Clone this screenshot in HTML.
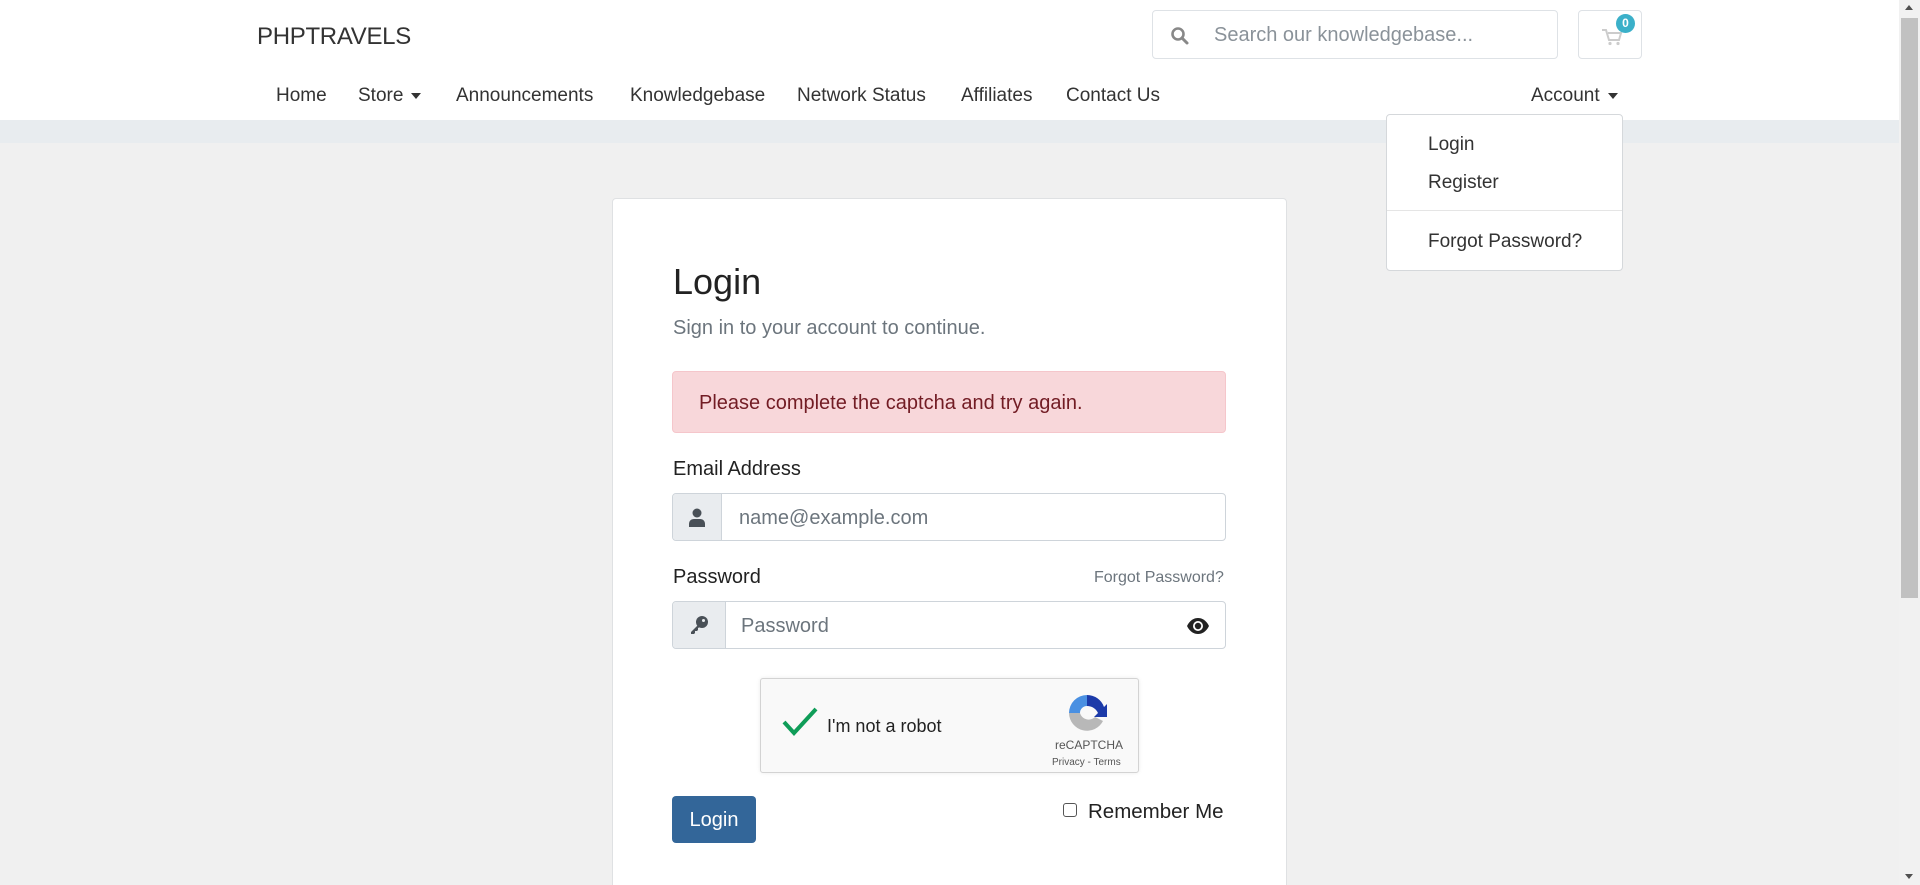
<!DOCTYPE html>
<html style="width:1920px;height:885px;overflow:hidden"><head><meta charset="utf-8"><style>
*{box-sizing:border-box;margin:0;padding:0}
body{width:1920px;height:885px;overflow:hidden;background:#f0f0f0;font-family:"Liberation Sans",sans-serif;position:relative;color:#212529}
.a{position:absolute}
.hdr{left:0;top:0;width:1899px;height:120px;background:#fff}
.band{left:0;top:120px;width:1899px;height:23px;background:#e8ecef}
.nav{top:85px;font-size:19px;color:#333;white-space:nowrap}
.caret{display:inline-block;border-left:5px solid transparent;border-right:5px solid transparent;border-top:6px solid #333;vertical-align:middle;margin-left:8px}
.card{left:612px;top:198px;width:675px;height:700px;background:#fff;border:1px solid #dfe1e3;border-radius:4px}
.inp{border:1px solid #ced4da;border-radius:4px;background:#fff;overflow:hidden}
.addon{position:absolute;left:0;top:0;bottom:0;background:#e9ecef;border-right:1px solid #ced4da}
.ph{position:absolute;top:2px;bottom:0;display:flex;align-items:center;font-size:20px;color:#6c757d}
.sb{left:1899px;top:0;width:21px;height:885px;background:#f1f1f1}
</style></head><body>
<div class="a hdr"></div>
<div class="a band"></div>
<div class="a" style="left:257px;top:23px;font-size:24px;color:#333;letter-spacing:-0.3px">PHPTRAVELS</div>
<div class="a inp" style="left:1152px;top:10px;width:406px;height:49px;border-color:#dee2e6">
 <svg class="a" style="left:17px;top:15px" width="20" height="20" viewBox="0 0 20 20"><circle cx="8" cy="8" r="5.5" fill="none" stroke="#888" stroke-width="2.6"/><path d="M12 12l5 5" stroke="#888" stroke-width="3" stroke-linecap="round"/></svg>
 <div class="ph" style="left:61px;color:#8a9299">Search our knowledgebase...</div>
</div>
<div class="a inp" style="left:1578px;top:10px;width:64px;height:49px;border-color:#dee2e6">
 <svg class="a" style="left:22px;top:17px" width="22" height="18" viewBox="0 0 22 18"><path d="M1 2h4l3 10h10l2-7H7" fill="none" stroke="#ccc" stroke-width="2"/><circle cx="9" cy="15.5" r="1.6" fill="#ccc"/><circle cx="17" cy="15.5" r="1.6" fill="#ccc"/></svg>
</div>
<div class="a" style="left:1616px;top:14px;width:19px;height:19px;border-radius:50%;background:#3bb0c9;color:#fff;font-size:12px;font-weight:bold;text-align:center;line-height:19px">0</div>
<div class="a nav" style="left:276px">Home</div>
<div class="a nav" style="left:358px">Store<span class="caret"></span></div>
<div class="a nav" style="left:456px">Announcements</div>
<div class="a nav" style="left:630px">Knowledgebase</div>
<div class="a nav" style="left:797px">Network Status</div>
<div class="a nav" style="left:961px">Affiliates</div>
<div class="a nav" style="left:1066px">Contact Us</div>
<div class="a nav" style="left:1531px">Account<span class="caret"></span></div>
<div class="a" style="left:1386px;top:114px;width:237px;height:157px;background:#fff;border:1px solid #d5d8db;border-radius:4px;font-size:19px;color:#333">
 <div class="a" style="left:41px;top:19px">Login</div>
 <div class="a" style="left:41px;top:57px">Register</div>
 <div class="a" style="left:0;top:95px;width:235px;height:1px;background:#e5e5e5"></div>
 <div class="a" style="left:41px;top:116px">Forgot Password?</div>
</div>
<div class="a card"></div>
<div class="a" style="left:673px;top:261px;font-size:36px;color:#222">Login</div>
<div class="a" style="left:673px;top:317px;font-size:20px;color:#6c757d">Sign in to your account to continue.</div>
<div class="a" style="left:672px;top:371px;width:554px;height:62px;background:#f8d7da;border:1px solid #f5c6cb;border-radius:4px;color:#721c24;font-size:20px;padding-left:26px;line-height:62px">Please complete the captcha and try again.</div>
<div class="a" style="left:673px;top:458px;font-size:20px;color:#222">Email Address</div>
<div class="a inp" style="left:672px;top:493px;width:554px;height:48px">
 <div class="addon" style="width:49px"><svg class="a" style="left:16px;top:14px" width="16" height="19" viewBox="0 0 16 19"><circle cx="8" cy="5" r="4.5" fill="#495057"/><path d="M0 19v-3c0-3 2-5 5-5h6c3 0 5 2 5 5v3z" fill="#495057"/></svg></div>
 <div class="ph" style="left:66px">name@example.com</div>
</div>
<div class="a" style="left:673px;top:566px;font-size:20px;color:#222">Password</div>
<div class="a" style="left:1094px;top:569px;font-size:16px;color:#6c757d">Forgot Password?</div>
<div class="a inp" style="left:672px;top:601px;width:554px;height:48px">
 <div class="addon" style="width:53px"><svg class="a" style="left:16px;top:13px" width="20" height="20" viewBox="0 0 20 20"><circle cx="13" cy="7" r="6" fill="#495057"/><path d="M9 10L2 17v2h3l1-1v-2h2l1-1v-2l2-1z" fill="#495057"/><circle cx="14.5" cy="5.5" r="1.5" fill="#e9ecef"/></svg></div>
 <div class="ph" style="left:68px">Password</div>
 <svg class="a" style="left:513px;top:15px" width="24" height="18" viewBox="0 0 24 18"><path d="M1 9C4 3 8 1 12 1s8 2 11 8c-3 6-7 8-11 8S4 15 1 9z" fill="#222"/><circle cx="12" cy="9" r="5" fill="#fff"/><circle cx="12" cy="9" r="3.2" fill="#222"/></svg>
</div>
<div class="a" style="left:760px;top:678px;width:379px;height:95px;background:#f9f9f9;border:1px solid #d3d3d3;border-radius:3px;box-shadow:0 0 4px rgba(0,0,0,.08)">
 <svg class="a" style="left:20px;top:27px" width="38" height="30" viewBox="0 0 38 30"><path d="M3 16l10 11L35 3" fill="none" stroke="#0f9d58" stroke-width="4"/></svg>
 <div class="a" style="left:66px;top:37px;font-size:18px;color:#222">I'm not a robot</div>
 <svg class="a" style="left:306px;top:14px" width="40" height="40" viewBox="0 0 40 40"><path d="M20 2a18 18 0 0 0-18 18h11a7 7 0 0 1 7-7z" fill="#4a90e2"/><path d="M20 2a18 18 0 0 1 17 12l3-3v13H27l4-4a12 12 0 0 0-11-7z" fill="#1c3aa9"/><path d="M2 20a18 18 0 0 0 34 8l-8-4a9 9 0 0 1-15-4z" fill="#b8b8b8"/></svg>
 <div class="a" style="left:294px;top:59px;font-size:12px;color:#555">reCAPTCHA</div>
 <div class="a" style="left:291px;top:78px;font-size:10px;color:#555">Privacy - Terms</div>
</div>
<div class="a" style="left:672px;top:796px;width:84px;height:47px;background:#336699;border-radius:4px;color:#fff;font-size:20px;text-align:center;line-height:49px">Login</div>
<div class="a" style="left:1063px;top:803px;width:14px;height:14px;border:1.5px solid #555;border-radius:3px;background:#fff"></div>
<div class="a" style="left:1088px;top:800px;font-size:20.5px;color:#222">Remember Me</div>
<div class="a sb"><div class="a" style="left:2px;top:18px;width:17px;height:580px;background:#c1c1c1"></div>
<div class="a" style="left:6px;top:5px;border-left:4px solid transparent;border-right:4px solid transparent;border-bottom:5px solid #505050"></div>
<div class="a" style="left:6px;top:874px;border-left:4px solid transparent;border-right:4px solid transparent;border-top:5px solid #505050"></div></div>
</body></html>
